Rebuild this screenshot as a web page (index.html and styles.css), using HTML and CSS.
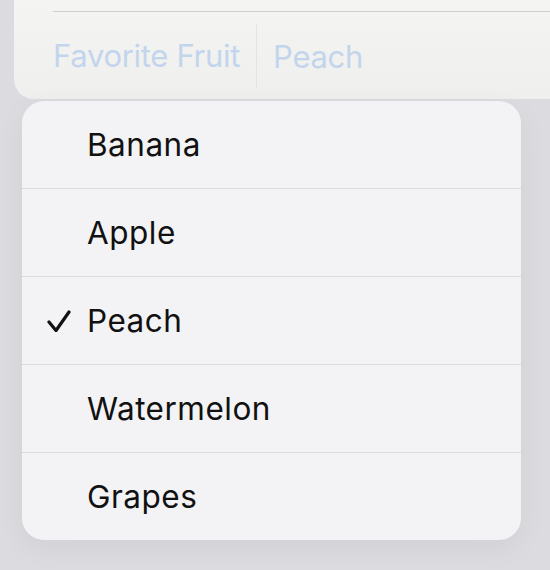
FILE: index.html
```html
<!DOCTYPE html>
<html lang="en">
<head>
    <meta charset="UTF-8">
    <meta name="viewport" content="width=device-width, initial-scale=1.0">
    <link rel="stylesheet" href="styles.css">
    <title>Favorite Fruit</title>
</head>
<body>
    <!-- Form card behind the menu -->
    <div class="form-card">
        <div class="form-row">
            <span class="form-label">Favorite Fruit</span>
            <span class="form-value">Peach</span>
        </div>
    </div>

    <!-- Popup menu -->
    <ul class="menu">
        <li class="menu-item"><span class="check"></span>Banana</li>
        <li class="menu-item"><span class="check"></span>Apple</li>
        <li class="menu-item selected">
            <span class="check">
                <svg width="24" height="22" viewBox="0 0 24 22">
                    <path d="M2 12 L9 20.5 L22 2" fill="none" stroke="#111" stroke-width="3.2" stroke-linecap="round" stroke-linejoin="round"/>
                </svg>
            </span>Peach
        </li>
        <li class="menu-item"><span class="check"></span>Watermelon</li>
        <li class="menu-item"><span class="check"></span>Grapes</li>
    </ul>
</body>
</html>
```

FILE: styles.css
```css
/* Reset */
body, ul {
    margin: 0;
    padding: 0;
}

body {
    background-color: #dcdce0;
    font-family: Inter, "Noto Sans", sans-serif;
    width: 550px;
    height: 570px;
    overflow: hidden;
}

/* Card with the form row, cut off at the top */
.form-card {
    margin-left: 14px;
    width: 560px;
    height: 99px;
    padding-top: 11px;
    box-sizing: border-box;
    background: linear-gradient(to bottom, #f4f4f3, #efefee);
    border-bottom-left-radius: 20px;
}

.form-row {
    margin-left: 39px;
    border-top: 1px solid #cfcfd0;
    display: flex;
    align-items: center;
    font-size: 31px;
    letter-spacing: -0.3px;
    color: #c3d5ec;
    padding-top: 12px;
}

.form-label {
    padding-right: 16px;
    border-right: 1px solid #e4e4e4;
    line-height: 64px;
}

.form-value {
    padding-left: 16px;
}

/* Menu */
.menu {
    list-style: none;
    margin: 2px 0 0 22px;
    width: 499px;
    background-color: #f3f3f5;
    border-radius: 22px;
    box-shadow: 0 8px 30px rgba(0, 0, 0, 0.05);
    overflow: hidden;
}

.menu-item {
    height: 87px;
    display: flex;
    align-items: center;
    font-size: 31.5px;
    letter-spacing: 0.5px;
    color: #111;
    border-top: 1.5px solid #dcdce0;
}

.menu-item:first-child {
    border-top: none;
}

.check {
    width: 65px;
    display: flex;
    justify-content: flex-end;
}

.check svg {
    margin-right: 16px;
}
```
